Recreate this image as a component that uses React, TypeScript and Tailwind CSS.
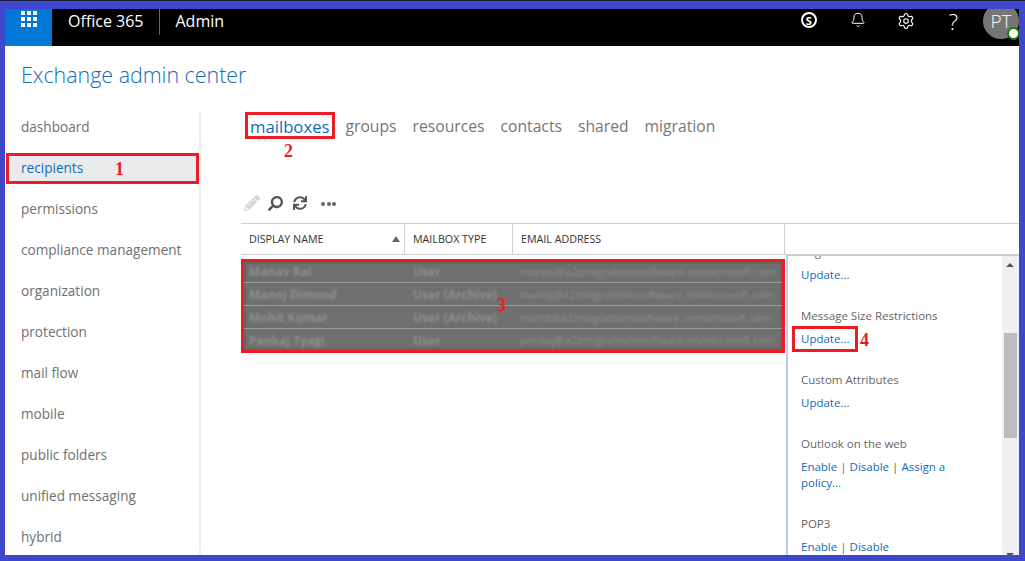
import { Bell, Settings } from "lucide-react";
import { FaPencilAlt, FaSearch, FaSync } from "react-icons/fa";

const navItems = [
  "dashboard",
  "recipients",
  "permissions",
  "compliance management",
  "organization",
  "protection",
  "mail flow",
  "mobile",
  "public folders",
  "unified messaging",
  "hybrid",
];

const tabs = ["groups", "resources", "contacts", "shared", "migration"];

const rows = [
  { name: "Manav Rai", type: "User", email: "manav@a2zmigrationssoftware.onmicrosoft.com", h: "h-[21px]" },
  { name: "Manoj Dimood", type: "User (Archive)", email: "manoj@a2zmigrationssoftware.onmicrosoft.com", h: "h-[23px] pt-[2px]" },
  { name: "Mohit Kumar", type: "User (Archive)", email: "mohit@a2zmigrationssoftware.onmicrosoft.com", h: "h-[23px] pt-[2px]" },
  { name: "Pankaj Tyagi", type: "User", email: "pankaj@a2zmigrationssoftware.onmicrosoft.com", h: "h-[21px] pt-[2px]" },
];

const Marker = ({ children, className }: { children: string; className: string }) => (
  <span className={`absolute font-['Liberation_Serif',serif] text-[18px] leading-none font-bold text-[#ed1c24] ${className}`}>
    {children}
  </span>
);

const Header = () => (
  <div className="flex h-[37px] shrink-0 items-start bg-black text-white">
    <div className="flex h-full w-[47px] justify-center bg-[#0078d7] pt-[2px]">
      <div className="grid h-[16px] grid-cols-3 gap-[2px]">
        {Array.from({ length: 9 }).map((_, i) => (
          <span key={i} className="size-[4px] bg-white" />
        ))}
      </div>
    </div>
    <span className="mt-[1px] ml-[16px] text-[16px] leading-[22px]">Office 365</span>
    <span className="ml-[15px] h-[26px] w-px bg-[#666]" />
    <span className="mt-[1px] ml-[16px] text-[16px] leading-[22px]">Admin</span>
    <div className="ml-auto flex items-start">
      <span className="mt-[3px] mr-[33px] flex size-[16px] items-center justify-center rounded-full border-2 border-white text-[11px] leading-none font-bold">
        S
      </span>
      <Bell className="mt-[3px] mr-[31px] size-[16px]" strokeWidth={1.5} />
      <Settings className="mt-[3px] mr-[34px] size-[18px]" strokeWidth={1.5} />
      <span className="mr-[25px] text-[22px] leading-[24px] font-light">?</span>
      <div className="relative -mt-[6px] flex size-[36px] items-center justify-center rounded-full bg-[#757575] text-[19px] font-light">
        PT
        <span className="absolute right-[-1px] bottom-[-1px] size-[13px] rounded-full border-2 border-[#107c10] bg-white" />
      </div>
    </div>
  </div>
);

const Sidebar = () => (
  <div className="h-[444px] w-[196px] shrink-0 border-r-2 border-[#eeeeee] pl-[1px]">
    <div className="-mt-[4px] flex flex-col">
      {navItems.map((item) =>
        item === "recipients" ? (
          <div
            key={item}
            className="my-[5px] flex h-[31px] shrink-0 items-center border-[3px] border-[#ed1c24] bg-[#eaebec] pl-[12px] text-[13.6px] text-[#0f6cbd]"
          >
            {item}
            <Marker className="left-[110px]">1</Marker>
          </div>
        ) : (
          <div key={item} className="flex h-[41px] shrink-0 items-center pl-[15px] text-[13.6px] text-[#707070]">
            {item}
          </div>
        ),
      )}
    </div>
  </div>
);

const Toolbar = () => (
  <div className="mt-[53px] ml-[43px] flex h-[20px] items-center text-[#555]">
    <FaPencilAlt className="size-[16px] text-[#d5d5d5]" />
    <FaSearch className="ml-[8px] size-[15px] -scale-x-100" />
    <FaSync className="ml-[10px] size-[14px]" />
    <div className="ml-[14px] flex gap-[1.5px] pt-[2px]">
      <span className="size-[4px] rounded-full bg-[#666]" />
      <span className="size-[4px] rounded-full bg-[#666]" />
      <span className="size-[4px] rounded-full bg-[#666]" />
    </div>
  </div>
);

const TableHead = () => (
  <div className="mt-[10px] ml-[40px] flex h-[32px] border-y border-[#cfcfcf] text-[10.7px] text-[#333333]">
    <div className="flex w-[164px] items-center justify-between border-r border-[#cfcfcf] pr-[4px] pl-[8px]">
      DISPLAY NAME
      <span className="h-0 w-0 border-x-[4px] border-b-[6px] border-x-transparent border-b-[#666]" />
    </div>
    <div className="flex w-[108px] items-center border-r border-[#cfcfcf] pl-[8px]">MAILBOX TYPE</div>
    <div className="flex w-[272px] items-center border-r border-[#cfcfcf] pl-[8px]">EMAIL ADDRESS</div>
  </div>
);

const BlurredRows = () => (
  <div className="relative mt-[4px] ml-[40px] flex h-[94px] w-[545px] flex-col overflow-hidden border-[3px] border-[#ed1c24] bg-[#6f6f6f] text-[12px] text-[#8f8f8f] shadow-[inset_0_0_0_2px_#666666]">
    {rows.map((row, i) => (
      <div key={row.name} className={`flex shrink-0 items-center ${row.h} ${i < 3 ? "border-b border-[#9a9a9a]" : ""}`}>
        <span className="w-[169px] pl-[5px] font-bold blur-[1px]">{row.name}</span>
        <span className="w-[107px] font-bold blur-[1px]">{row.type}</span>
        <span className="text-[11.2px] whitespace-nowrap blur-[0.8px]">{row.email}</span>
      </div>
    ))}
    <Marker className="top-[34px] left-[253px]">3</Marker>
  </div>
);

const DetailLink = ({ children }: { children: string }) => <span className="text-[#0f6cbd]">{children}</span>;

const Bar = () => <span className="text-[#666666]">|</span>;

const DetailPane = () => (
  <div className="relative flex h-[301px] w-[233px] shrink-0 overflow-hidden border-t border-l-2 border-[#b5d0f2] text-[11.5px] leading-[16px]">
    <div className="relative w-[214px] pl-[13px]">
      <div className="absolute top-[-12px] text-[#666666]">Organization</div>
      <div className="absolute top-[11px]"><DetailLink>Update...</DetailLink></div>
      <div className="absolute top-[52px] whitespace-nowrap text-[#666666]">Message Size Restrictions</div>
      <div className="absolute top-[75px]"><DetailLink>Update...</DetailLink></div>
      <div className="absolute top-[116px] text-[#666666]">Custom Attributes</div>
      <div className="absolute top-[139px]"><DetailLink>Update...</DetailLink></div>
      <div className="absolute top-[180px] whitespace-nowrap text-[#666666]">Outlook on the web</div>
      <div className="absolute top-[203px] flex gap-[3px] whitespace-nowrap">
        <DetailLink>Enable</DetailLink>
        <Bar />
        <DetailLink>Disable</DetailLink>
        <Bar />
        <DetailLink>Assign a</DetailLink>
      </div>
      <div className="absolute top-[219px]"><DetailLink>policy...</DetailLink></div>
      <div className="absolute top-[260px] text-[#666666]">POP3</div>
      <div className="absolute top-[283px] flex gap-[3px] whitespace-nowrap">
        <DetailLink>Enable</DetailLink>
        <Bar />
        <DetailLink>Disable</DetailLink>
      </div>
    </div>
    <div className="relative w-[17px] bg-[#f0f0f0]">
      <span className="absolute top-[7px] left-[4px] h-0 w-0 border-x-[4px] border-b-[4px] border-x-transparent border-b-[#555]" />
      <div className="absolute top-[77px] left-[2px] h-[105px] w-[13px] bg-[#bdbdbd]" />
      <span className="absolute bottom-[-1px] left-[4px] h-0 w-0 border-x-[4px] border-t-[4px] border-x-transparent border-t-[#555]" />
    </div>
    <div className="absolute top-[70px] left-[4px] h-[26px] w-[66px] border-[3px] border-[#ed1c24]" />
    <Marker className="top-[75px] left-[72px]">4</Marker>
  </div>
);

export default function App() {
  return (
    <div className="h-[561px] w-[1025px] border-t border-[#1c1c3a]">
      <div className="relative flex h-[560px] flex-col overflow-hidden border-t-[8px] border-r-[6px] border-b-[6px] border-l-[5px] border-[#3f48cc] bg-white font-['Open_Sans',sans-serif]">
        <Header />
        <div className="flex h-[65px] shrink-0 items-center pb-[6px] pl-[16px] text-[21.4px] font-light text-[#0f6cbd]">
          Exchange admin center
        </div>
        <div className="flex min-h-0 flex-1">
          <Sidebar />
          <div className="flex min-w-0 flex-1 flex-col">
            <div className="relative mt-[2px] flex h-[27px] items-center pl-[49px] text-[#767676]">
              <div className="absolute -top-px left-[44px] h-[27px] w-[90px] border-[3px] border-[#ed1c24]" />
              <span className="text-[16.7px] text-[#0f6cbd]">mailboxes</span>
              <div className="ml-[16px] flex gap-[16px] text-[15.7px]">
                {tabs.map((t) => (
                  <span key={t}>{t}</span>
                ))}
              </div>
              <Marker className="top-[29px] left-[83px]">2</Marker>
            </div>
            <Toolbar />
            <TableHead />
            <div className="flex min-h-0 flex-1 items-start">
              <BlurredRows />
              <div className="ml-px">
                <DetailPane />
              </div>
            </div>
          </div>
        </div>
      </div>
    </div>
  );
}
